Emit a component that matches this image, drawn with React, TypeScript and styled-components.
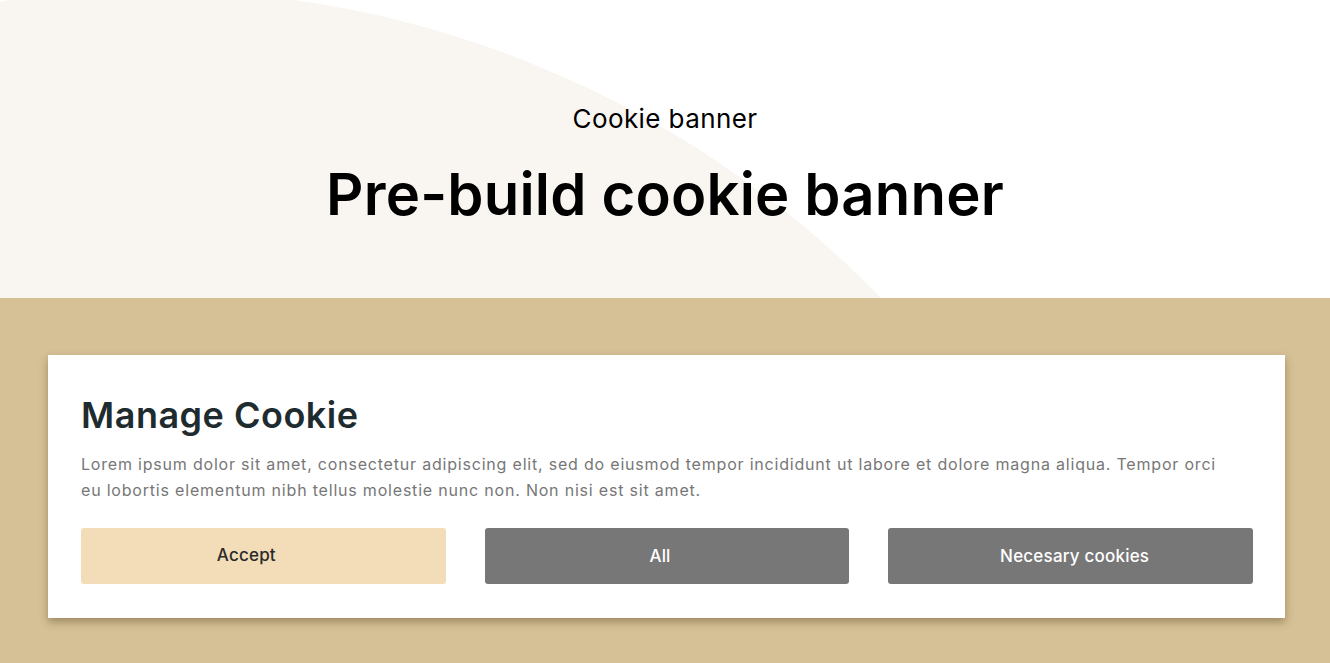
import styled, { createGlobalStyle } from "styled-components";

const GlobalStyle = createGlobalStyle`
  html, body {
    margin: 0;
    padding: 0;
    background: #ffffff;
  }
  body {
    font-family: "Inter", "Liberation Sans", sans-serif;
  }
  * {
    box-sizing: border-box;
  }
`;

const Page = styled.div`
  width: 1330px;
  height: 663px;
  overflow: hidden;
  display: flex;
  flex-direction: column;
`;

const Hero = styled.header`
  position: relative;
  height: 298px;
  overflow: hidden;
  display: flex;
  flex-direction: column;
  align-items: center;
  padding-top: 103px;

  /* big soft circle behind the heading */
  &::before {
    content: "";
    position: absolute;
    left: -865px;
    top: -10px;
    width: 2034px;
    height: 2034px;
    border-radius: 50%;
    background: #f9f6f1;
  }
`;

const Eyebrow = styled.p`
  position: relative;
  margin: 0;
  font-family: "Inter", "Liberation Sans", sans-serif;
  font-size: 26px;
  font-weight: 400;
  line-height: 32px;
  letter-spacing: 0.4px;
  color: #000000;
`;

const HeroTitle = styled.h1`
  position: relative;
  margin: 28px 0 0;
  font-family: "Inter", "Liberation Sans", sans-serif;
  font-size: 58px;
  font-weight: 600;
  line-height: 62px;
  letter-spacing: 0.2px;
  color: #000000;
`;

const BannerArea = styled.section`
  flex: 1;
  background: #d6c096;
  padding: 57px 45px 0 48px;
`;

const Card = styled.div`
  background: #ffffff;
  height: 263px;
  padding: 38px 32px 0 33px;
  box-shadow: 0 4px 8px rgba(90, 70, 30, 0.45);
`;

const CardTitle = styled.h2`
  margin: 0;
  font-family: "Inter", "Liberation Sans", sans-serif;
  font-size: 36px;
  font-weight: 600;
  line-height: 44px;
  letter-spacing: 0.5px;
  color: #1f2c2f;
`;

const CardText = styled.p`
  margin: 14px 0 0;
  max-width: 1145px;
  font-family: "Inter", "Liberation Sans", sans-serif;
  font-size: 16px;
  font-weight: 400;
  line-height: 26px;
  letter-spacing: 0.8px;
  color: #777777;
`;

const Actions = styled.div`
  margin-top: 25px;
  display: grid;
  grid-template-columns: repeat(3, 1fr);
  column-gap: 39px;
`;

const ActionButton = styled.button<{ $primary?: boolean; $shift?: number }>`
  height: 56px;
  border: none;
  border-radius: 3px;
  cursor: pointer;
  font-family: "Inter", "Liberation Sans", sans-serif;
  font-size: 17px;
  font-weight: 500;
  letter-spacing: 0.2px;
  padding: ${(p) => (p.$primary ? "0 0 2px" : "0")};
  padding-left: ${(p) => Math.max(0, (p.$shift ?? 0) * 2)}px;
  padding-right: ${(p) => Math.max(0, -(p.$shift ?? 0) * 2)}px;
  background: ${(p) => (p.$primary ? "#f2ddb8" : "#777777")};
  color: ${(p) => (p.$primary ? "#2a2a2a" : "#ffffff")};
`;

const App = () => {
  return (
    <Page>
      <GlobalStyle />
      <Hero>
        <Eyebrow>Cookie banner</Eyebrow>
        <HeroTitle>Pre-build cookie banner</HeroTitle>
      </Hero>
      <BannerArea>
        <Card>
          <CardTitle>Manage Cookie</CardTitle>
          <CardText>
            Lorem ipsum dolor sit amet, consectetur adipiscing elit, sed do eiusmod tempor incididunt ut labore et dolore magna aliqua. Tempor orci eu lobortis elementum nibh tellus molestie nunc non. Non nisi est sit amet.
          </CardText>
          <Actions>
            <ActionButton $primary $shift={-17}>Accept</ActionButton>
            <ActionButton $shift={-7}>All</ActionButton>
            <ActionButton $shift={4}>Necesary cookies</ActionButton>
          </Actions>
        </Card>
      </BannerArea>
    </Page>
  );
};

export default App;
